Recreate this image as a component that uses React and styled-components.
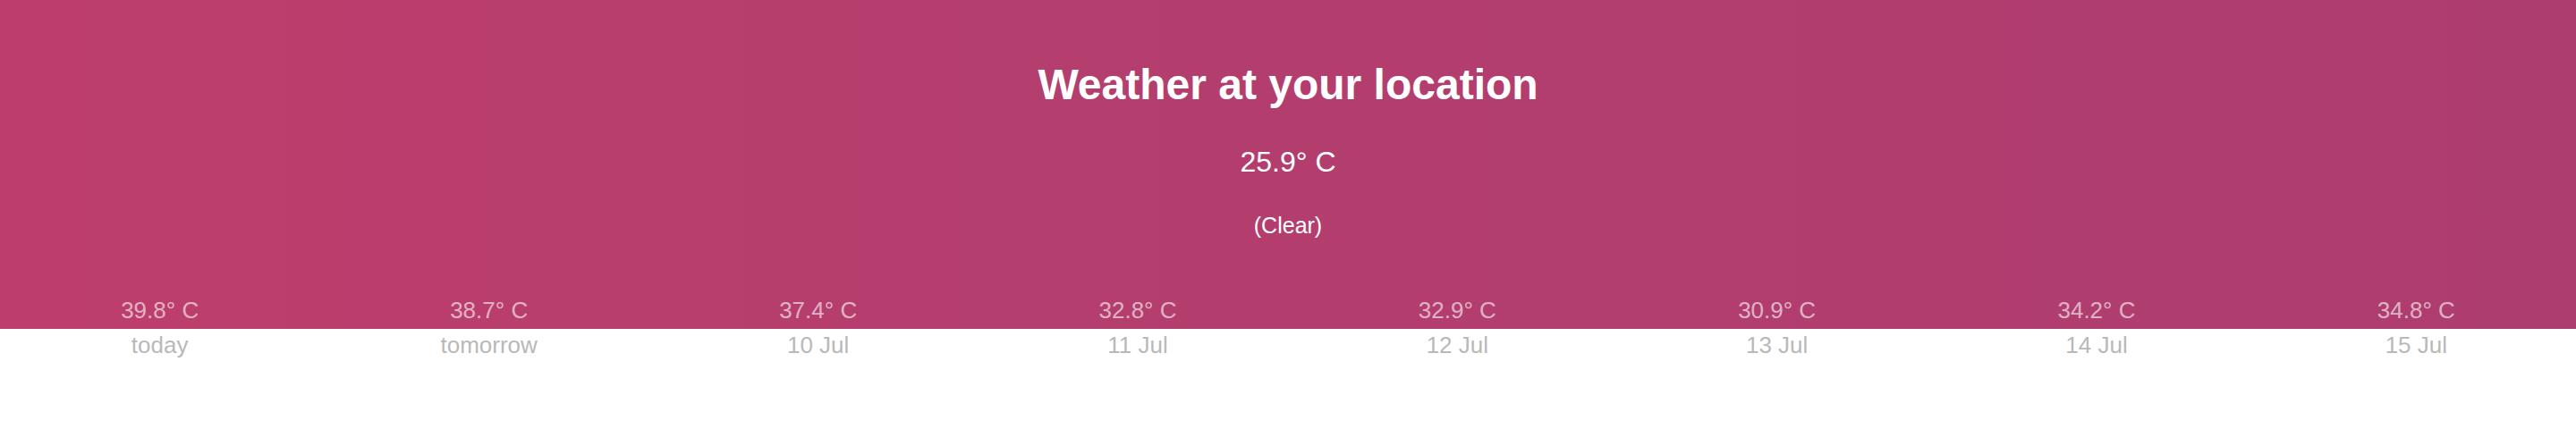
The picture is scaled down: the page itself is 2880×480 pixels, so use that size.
import styled, { createGlobalStyle } from "styled-components";

const GlobalStyle = createGlobalStyle`
  html, body {
    margin: 0;
    padding: 0;
    background: #ffffff;
    font-family: "Liberation Sans", Arial, Helvetica, sans-serif;
  }
`;

// one grid for the whole page: the forecast columns share their widths
// between the temperature row (on the banner) and the date row (below it)
const Page = styled.main`
  display: grid;
  grid-template-columns: repeat(8, auto);
  text-align: center;
`;

const Banner = styled.div`
  grid-column: 1 / -1;
  grid-row: 1 / 5;
  background: linear-gradient(90deg, #bd3e6c 0%, #b43e6e 40%, #ae3d6f 100%);
`;

const Title = styled.h1`
  grid-column: 1 / -1;
  grid-row: 1;
  margin: 67px 0 0;
  color: #ffffff;
  font-size: 48px;
  line-height: 56px;
  font-weight: bold;
`;

const CurrentTemp = styled.p`
  grid-column: 1 / -1;
  grid-row: 2;
  margin: 38px 0 0;
  color: #ffffff;
  font-size: 32px;
  line-height: 40px;
`;

const Condition = styled.p`
  grid-column: 1 / -1;
  grid-row: 3;
  margin: 35px 0 0;
  color: #ffffff;
  font-size: 25px;
  line-height: 32px;
`;

const ForecastCell = styled.div`
  grid-column: ${(p) => p.$col};
  grid-row: ${(p) => (p.$day ? 5 : 4)};
  font-size: 26px;
  line-height: 32px;
  white-space: nowrap;
  padding: ${(p) => (p.$day ? "2px 0 0" : "63px 0 5px")};
  color: ${(p) => (p.$day ? "#b9b9b9" : "rgba(255, 255, 255, 0.62)")};
`;

const forecast = [
  { temp: "39.8° C", day: "today" },
  { temp: "38.7° C", day: "tomorrow" },
  { temp: "37.4° C", day: "10 Jul" },
  { temp: "32.8° C", day: "11 Jul" },
  { temp: "32.9° C", day: "12 Jul" },
  { temp: "30.9° C", day: "13 Jul" },
  { temp: "34.2° C", day: "14 Jul" },
  { temp: "34.8° C", day: "15 Jul" },
];

const App = () => {
  return (
    <Page>
      <GlobalStyle />
      <Banner />
      <Title>Weather at your location</Title>
      <CurrentTemp>25.9° C</CurrentTemp>
      <Condition>(Clear)</Condition>
      {forecast.map((f, i) => (
        <ForecastCell key={"t" + f.day} $col={i + 1}>
          {f.temp}
        </ForecastCell>
      ))}
      {forecast.map((f, i) => (
        <ForecastCell key={"d" + f.day} $col={i + 1} $day>
          {f.day}
        </ForecastCell>
      ))}
    </Page>
  );
};

export default App;
